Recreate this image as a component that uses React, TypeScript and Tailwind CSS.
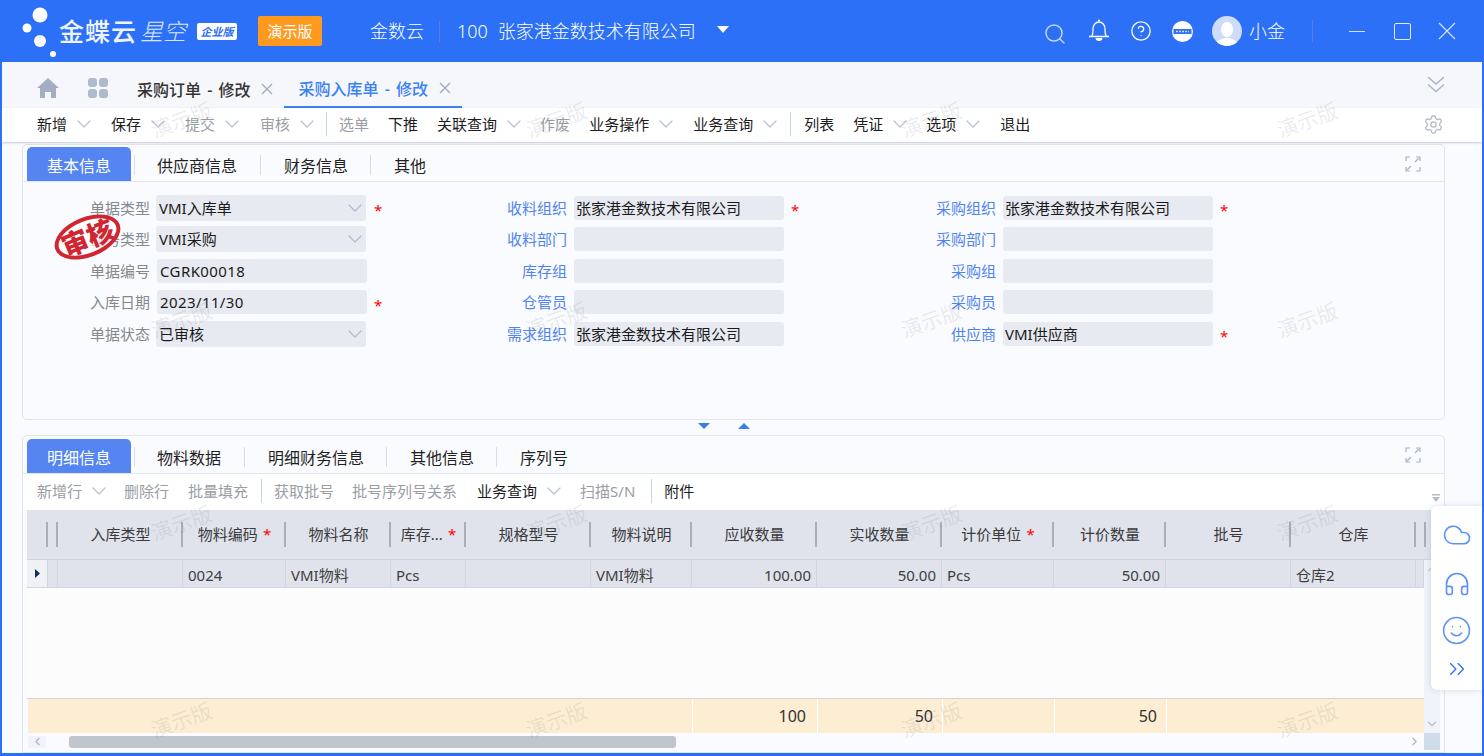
import React from "react";
import { ChevronDown, Search, CircleHelp, Settings, Cloud, Headphones, Smile, ChevronsRight, ChevronUp, ChevronLeft, ChevronRight } from "lucide-react";

const FONT = { fontFamily: '"Noto Sans","Noto Sans CJK SC",sans-serif' };

const Chev = ({ end }: { end: string }) => (
  <>
    <ChevronDown size={24} strokeWidth={1.25} className="ml-[5px] text-[#b9c2d2]" />
    <span className={end} />
  </>
);

type Tool = { t: string; c?: boolean; dim?: boolean; e?: string } | { d: string };

const Toolbar = ({ items }: { items: Tool[] }) => (
  <>
    {items.map((it, i) =>
      "d" in it ? (
        <span key={i} className={`w-px h-[24px] bg-[#c5d3e8] ${it.d}`} />
      ) : (
        <span key={i} className="flex items-center">
          <span className={it.dim ? "text-[#9a9da3]" : "text-[#1c1c1c]"}>{it.t}</span>
          {it.c ? <Chev end={it.e ?? "w-[15px]"} /> : <span className={it.e ?? "w-[19px]"} />}
        </span>
      )
    )}
  </>
);

const Sep = () => <span className="w-px h-[20px] bg-[#d5deeb] mt-[2px]" />;

const PanelTabs = ({ items, tall }: { items: string[]; tall?: boolean }) => (
  <div className={`flex items-end border-b border-[#e3e7ef] pl-[4px] text-[16px] text-[#1f1f1f] ${tall ? "h-[38px]" : "h-[37px]"}`}>
    <div className="w-[104px] h-[34px] pt-[3px] bg-[#5585f0] rounded-t-[5px] text-white flex items-center justify-center mr-[3px]">{items[0]}</div>
    {items.slice(1).map((t, i) => (
      <div key={t} className="flex items-center h-[34px]">
        <Sep />
        <span className={`pt-[3px] ${i === 0 ? "ml-[22px] mr-[23px]" : "ml-[23px] mr-[22px]"}`}>{t}</span>
      </div>
    ))}
  </div>
);

const Expand = () => (
  <svg width="16" height="16" viewBox="0 0 16 16" fill="none" stroke="#a9b1c2" strokeWidth="1.2" className="absolute right-[23px] top-[11px]">
    <path d="M1 5V1h4M15 5V1h-4M1 11v4h4M15 11v4h-4" />
    <path d="M10 6l4-4M6 10l-4 4" />
  </svg>
);

const Field = ({ label, value, kind = "text", star, blue, w }: { label: string; value?: string; kind?: "select" | "text"; star?: boolean; blue?: boolean; w: string }) => (
  <div className="flex items-center h-[31.5px]">
    <span className={`${w} text-right mr-[6px] ${blue ? "text-[#4f84ef]" : "text-[#85898f]"}`}>{label}</span>
    <div className={`w-[210px] bg-[#e7eaf0] rounded-[3px] flex items-center text-[#1a1a1a] ${kind === "select" ? "h-[26px] pl-[3px]" : blue ? "h-[24px] ml-px pl-[2px]" : "h-[24px] ml-px pl-[3px]"}`}>
      <span className={`flex-1 ${value && /^[\x00-\x7f]+$/.test(value) ? "tracking-[0.4px]" : ""}`}>{value}</span>
      {kind === "select" && <ChevronDown size={24} strokeWidth={1.25} className="mr-[-1px] text-[#b4bbcc]" />}
    </div>
    <span className={`text-[#f00] ${kind === "select" ? "ml-[8px]" : "ml-[7px]"} mt-[5px] w-[7px]`}>{star ? "*" : ""}</span>
  </div>
);

const Req = () => <b className="text-[#f00] font-normal ml-[5px]">*</b>;

const cols = [21, 10, 125, 103, 105, 75, 125, 101, 125, 125, 112, 112, 125, 125, 8];
const heads: React.ReactNode[] = ["", "", "入库类型", <>物料编码<Req /></>, "物料名称", <>库存...<Req /></>, "规格型号", "物料说明", "应收数量", "实收数量", <>计价单位<Req /></>, "计价数量", "批号", "仓库", ""];
const row: [string, string][] = [["", ""], ["", ""], ["", ""], ["0024", "l"], ["VMI物料", "l"], ["Pcs", "l"], ["", ""], ["VMI物料", "l"], ["100.00", "r"], ["50.00", "r"], ["Pcs", "l"], ["50.00", "r"], ["", ""], ["仓库2", "l"], ["", ""]];
const foot: [number, string][] = [[665, ""], [125, "100"], [125, "50"], [112, ""], [112, "50"], [0, ""]];

const Mark = ({ x, y }: { x: number; y: number }) => (
  <span className="absolute z-20 text-[21px] leading-none text-[rgba(90,100,120,0.13)] rotate-[-20deg] pointer-events-none" style={{ left: x - 31, top: y - 10 }}>演示版</span>
);

export default function App() {
  return (
    <div style={FONT} className="relative w-[1484px] h-[756px] overflow-hidden bg-[#2b70f7] text-[15px]">
      {/* header */}
      <header className="h-[62px] flex items-center text-white pl-[20px]">
        <svg width="40" height="58" viewBox="0 0 40 58" className="mt-[-3px]" fill="#fff">
          <circle cx="20" cy="14" r="7.5" />
          <circle cx="7" cy="27" r="4.5" />
          <circle cx="20" cy="40" r="6" />
          <circle cx="33" cy="53" r="3" />
        </svg>
        <span className="ml-[-1px] text-[25px] font-medium leading-none tracking-[1px] text-[#eef3ff]">金蝶云</span>
        <span className="ml-[3px] text-[23px] italic font-light leading-none text-[#dbe7ff]">星空</span>
        <span className="ml-[11px] w-[40px] h-[17px] bg-white rounded-[2px] text-[#2b70f7] text-[11px] font-bold italic flex items-center justify-center leading-none">企业版</span>
        <span className="ml-[21px] w-[64px] h-[30px] bg-[#ff9a1f] rounded-[2px] flex items-center justify-center text-[15px]">演示版</span>
        <span className="ml-[48px] text-[18px] font-light">金数云</span>
        <span className="ml-[15px] mr-[17px] w-px h-[21px] bg-[#5a7bea]" />
        <span className="text-[18px] font-light">100</span>
        <span className="ml-[10px] text-[18px] font-light">张家港金数技术有限公司</span>
        <svg width="12" height="7" viewBox="0 0 12 7" className="ml-[21px] mt-[-3px]" fill="#fff"><path d="M0 0h12L6 7z" /></svg>
        <span className="flex-1" />
        <Search size={24} strokeWidth={1.5} className="text-[#c3d6fd] mt-[5px] mr-[21px]" />
        <svg width="22" height="24" viewBox="0 0 22 24" fill="none" stroke="#fff" strokeWidth="1.3" className="mr-[20px] mt-[-3px]">
          <path d="M1 18.5h20M3.5 18.5c1.6-2 1.5-4 1.5-7.5 0-4 2.6-7 6-7s6 3 6 7c0 3.5-.1 5.5 1.5 7.5" />
          <circle cx="11" cy="2.5" r="1" fill="#fff" stroke="none" />
          <path d="M7.5 20h7c0 2-1.5 3-3.500 3s-3.500-1-3.500-3z" fill="#fff" stroke="none" />
        </svg>
        <CircleHelp size={22} strokeWidth={1.4} className="mr-[20px]" />
        <svg width="21" height="21" viewBox="0 0 21 21" className="mr-[19px]">
          <circle cx="10.5" cy="10.5" r="10.5" fill="#fff" />
          <rect x="1.5" y="8" width="18" height="5" fill="#2b70f7" />
          <path d="M4 10.5h13" stroke="#cfdcf9" strokeWidth="1.5" strokeDasharray="2 1" />
        </svg>
        <span className="w-[30px] h-[30px] rounded-full bg-[#cfdcf9] overflow-hidden flex items-end justify-center mr-[7px]">
          <svg width="24" height="26" viewBox="0 0 24 26" fill="#fff"><ellipse cx="12" cy="9.5" rx="6" ry="7.5" /><path d="M0 26c1-6 6-6 9-8h6c3 2 8 2 9 8z" /></svg>
        </span>
        <span className="text-[18px] font-light">小金</span>
        <span className="ml-[27px] w-px h-[22px] bg-[#5a7bea]" />
        <span className="ml-[36px] w-[16px] h-px bg-[#d7e3fd]" />
        <span className="ml-[29px] w-[17px] h-[17px] border border-[#e1eafe] rounded-[2px]" />
        <svg width="18" height="18" viewBox="0 0 18 18" stroke="#d7e3fd" strokeWidth="1.1" className="ml-[27px] mr-[28px]"><path d="M1 1l16 16M17 1 1 17" /></svg>
      </header>

      {/* body */}
      <div className="relative mx-[2px] h-[691px] bg-[#fafbfe] flex flex-col">
        {/* doc tabs */}
        <div className="h-[46px] bg-[#f5f7fb] flex items-end pl-[35px] relative">
          <svg width="22" height="20" viewBox="0 0 22 20" fill="#a3aec4" className="mb-[10px]"><path d="M11 0 0 10h3v10h5v-6h6v6h5V10h3z" /></svg>
          <svg width="20" height="20" viewBox="0 0 20 20" fill="#b0bacf" className="ml-[29px] mb-[10px]"><rect width="9" height="9" rx="3" /><rect x="11" width="9" height="9" rx="3" /><rect y="11" width="9" height="9" rx="3" /><rect x="11" y="11" width="9" height="9" rx="3" /></svg>
          <div className="ml-[29px] h-[46px] flex items-center pt-[10px] text-[16px] font-medium text-[#333] [word-spacing:2px]">
            采购订单 - 修改
            <svg width="12" height="12" viewBox="0 0 12 12" stroke="#a3acbe" strokeWidth="1.4" className="ml-[11px] mt-[-3px]"><path d="M1 1l10 10M11 1 1 11" /></svg>
          </div>
          <div className="ml-[11px] w-[178px] h-[46px] flex items-center pt-[10px] pl-[14px] text-[16px] font-medium text-[#3b82f6] border-b-2 border-[#3b82f6] [word-spacing:2px]">
            采购入库单 - 修改
            <svg width="12" height="12" viewBox="0 0 12 12" stroke="#a3acbe" strokeWidth="1.4" className="ml-[11px] mt-[-3px]"><path d="M1 1l10 10M11 1 1 11" /></svg>
          </div>
          <svg width="18" height="17" viewBox="0 0 18 17" fill="none" stroke="#aab3c5" strokeWidth="1.4" className="absolute right-[37px] top-[14px]"><path d="M1 1l8 7 8-7M1 8.5l8 7 8-7" /></svg>
        </div>

        {/* toolbar */}
        <div className="h-[34px] pb-[2px] bg-white flex items-center pl-[35px] shadow-[0_1px_2px_rgba(130,145,175,0.45)] z-10 relative">
          <Toolbar items={[
            { t: "新增", c: true }, { t: "保存", c: true }, { t: "提交", c: true, dim: true, e: "w-[16px]" }, { t: "审核", c: true, dim: true }, { d: "ml-[-8px] mr-[12px]" },
            { t: "选单", dim: true }, { t: "下推" }, { t: "关联查询", c: true, e: "w-[14px]" }, { t: "作废", dim: true }, { t: "业务操作", c: true }, { t: "业务查询", c: true }, { d: "ml-[-7px] mr-[13px]" },
            { t: "列表" }, { t: "凭证", c: true, e: "w-[14px]" }, { t: "选项", c: true }, { t: "退出" },
          ]} />
          <Settings size={21} strokeWidth={1.5} className="absolute right-[38px] top-[6px] text-[#b4bccb]" />
        </div>

        {/* panel 1 */}
        <section className="relative ml-[20px] w-[1423px] h-[276px] mt-[2px] border border-[#e0e5ee] rounded-[5px]">
          <PanelTabs items={["基本信息", "供应商信息", "财务信息", "其他"]} />
          <Expand />
          <div className="pt-[10px]">
            {[
              [["单据类型", "VMI入库单", "select", true], ["收料组织", "张家港金数技术有限公司", "text", true], ["采购组织", "张家港金数技术有限公司", "text", true]],
              [["业务类型", "VMI采购", "select", false], ["收料部门", "", "text", false], ["采购部门", "", "text", false]],
              [["单据编号", "CGRK00018", "text", false], ["库存组", "", "text", false], ["采购组", "", "text", false]],
              [["入库日期", "2023/11/30", "text", true], ["仓管员", "", "text", false], ["采购员", "", "text", false]],
              [["单据状态", "已审核", "select", false], ["需求组织", "张家港金数技术有限公司", "text", false], ["供应商", "VMI供应商", "text", true]],
            ].map((r, i) => (
              <div key={i} className="flex">
                <div className="w-[377px]"><Field w="w-[127px]" label={r[0][0] as string} value={r[0][1] as string} kind={r[0][2] as "select" | "text"} star={r[0][3] as boolean} /></div>
                <div className="w-[400px]"><Field w="w-[167px]" blue label={r[1][0] as string} value={r[1][1] as string} star={r[1][3] as boolean} /></div>
                <div><Field w="w-[196px]" blue label={r[2][0] as string} value={r[2][1] as string} star={r[2][3] as boolean} /></div>
              </div>
            ))}
          </div>
          {/* stamp */}
          <div className="absolute left-[30px] top-[72px] w-[69px] h-[40px] rounded-[50%] border-[4px] border-[#d02632] bg-white/70 rotate-[-22deg] flex items-center justify-center text-[#d02632] font-black text-[27px] leading-none">审核</div>
        </section>

        {/* splitter */}
        <div className="h-[15px] pb-[3px] flex items-center justify-center gap-[28px] ml-[-36px]">
          <svg width="12" height="6" viewBox="0 0 12 6" fill="#3b7cf0"><path d="M0 0h12L6 6z" /></svg>
          <svg width="12" height="6" viewBox="0 0 12 6" fill="#3b7cf0"><path d="M0 6h12L6 0z" /></svg>
        </div>

        {/* panel 2 */}
        <section className="relative ml-[20px] w-[1423px] h-[318px] border border-[#e0e5ee] rounded-t-[5px] flex flex-col">
          <PanelTabs tall items={["明细信息", "物料数据", "明细财务信息", "其他信息", "序列号"]} />
          <Expand />
          <div className="h-[36px] pb-[2px] shrink-0 flex items-center pl-[14px] bg-white">
            <Toolbar items={[
              { t: "新增行", c: true, dim: true, e: "w-[13px]" }, { t: "删除行", dim: true }, { t: "批量填充", dim: true }, { d: "ml-[-6px] mr-[12px]" }, { t: "获取批号", dim: true, e: "w-[18px]" }, { t: "批号序列号关系", dim: true, e: "w-[20px]" }, { t: "业务查询", c: true, e: "w-[14px]" }, { t: "扫描S/N", dim: true, e: "w-[16px]" }, { d: "mr-[12px]" }, { t: "附件" },
            ]} />
            <svg width="8" height="10" viewBox="0 0 8 10" fill="#b5bcc9" className="absolute right-[4px] top-[58px]"><path d="M0 0h8v1.5H0zM0 3h8L4 8z" /></svg>
          </div>
          {/* grid */}
          <div className="flex-1 flex flex-col ml-[4px] mr-[4px] min-h-0">
            <div className="flex h-[50px] shrink-0 bg-[#e0e3ec] border-b border-[#cfd4de] overflow-hidden">
              {cols.map((w, i) => (
                <div key={i} className="relative shrink-0 flex items-center justify-center text-[#3a3a3a]" style={{ width: i === 14 ? 10 : w }}>
                  {heads[i]}
                  <span className="absolute right-0 top-[12px] h-[25px] w-[2px] bg-[#a9aeb9]" />
                </div>
              ))}
            </div>
            <div className="flex-1 flex min-h-0">
              <div className="w-[1397px] flex flex-col">
                <div className="flex h-[28px] bg-[#e0e3ec] border-b border-[#cfd4de]">
                  {cols.map((w, i) => (
                    <div key={i} className={`shrink-0 flex items-center border-r border-[#d0d5df] text-[#3e3e3e] pt-[4px] ${row[i][1] === "r" ? "justify-end pr-[5px]" : "pl-[5px]"} ${i === 0 ? "bg-[#f0f1f5] justify-center !pl-0 !pt-0" : ""}`} style={{ width: w }}>
                      {i === 0 ? <svg width="5" height="9" viewBox="0 0 5 9" fill="#12305f"><path d="M0 0l5 4.5L0 9z" /></svg> : row[i][0]}
                    </div>
                  ))}
                </div>
                <div className="h-[111px] bg-[#fcfcfd] border-b border-[#d0d3da]" />
                <div className="h-[34px] bg-[#fdeed3] flex text-[16px] text-[#333] ml-px">
                  {foot.map(([w, t], i) => (
                    <div key={i} className={`flex items-center justify-end ${i === 1 ? "pr-[11px]" : "pr-[9px]"} ${i < 5 ? "border-r border-white" : "flex-1"}`} style={i < 5 ? { width: w } : undefined}>{t}</div>
                  ))}
                </div>
              </div>
              <div className="w-[16px] bg-[#f0f3fa] flex flex-col items-center justify-between py-[2px]">
                <ChevronUp size={14} className="text-[#c6ccd8]" />
                <ChevronDown size={14} className="text-[#b3bac8]" />
              </div>
            </div>
            <div className="h-[17px] shrink-0 flex items-center mb-[2px] ml-px">
              <div className="w-[18px] h-[12px] bg-[#f0f3fa] flex items-center justify-center"><ChevronLeft size={13} className="text-[#aab2c2]" /></div>
              <span className="w-[23px]" />
              <div className="w-[607px] h-[12px] bg-[#c0c5ce] rounded-[3px]" />
              <span className="flex-1" />
              <ChevronRight size={13} className="text-[#aab2c2] mr-[3px]" />
              <div className="w-[16px] h-[17px] bg-[#cfdde9]" />
            </div>
          </div>
        </section>
      </div>

      {/* side float */}
      <aside className="absolute left-[1431px] top-[506px] w-[51px] h-[184px] bg-white rounded-l-[6px] shadow-[0_0_6px_rgba(120,140,180,0.3)] z-30 flex flex-col items-center pt-[14px] text-[#5c92f5]">
        <Cloud size={30} strokeWidth={1.3} />
        <Headphones size={28} strokeWidth={1.4} className="mt-[20px]" />
        <Smile size={31} strokeWidth={1.2} className="mt-[17px]" />
        <ChevronsRight size={26} strokeWidth={1.2} className="mt-[10px] text-[#2b70f7]" />
      </aside>

      {[120, 320, 523, 720].flatMap((y) => [181, 556, 931, 1307].map((x) => <Mark key={`${x}-${y}`} x={x} y={y} />))}
    </div>
  );
}
